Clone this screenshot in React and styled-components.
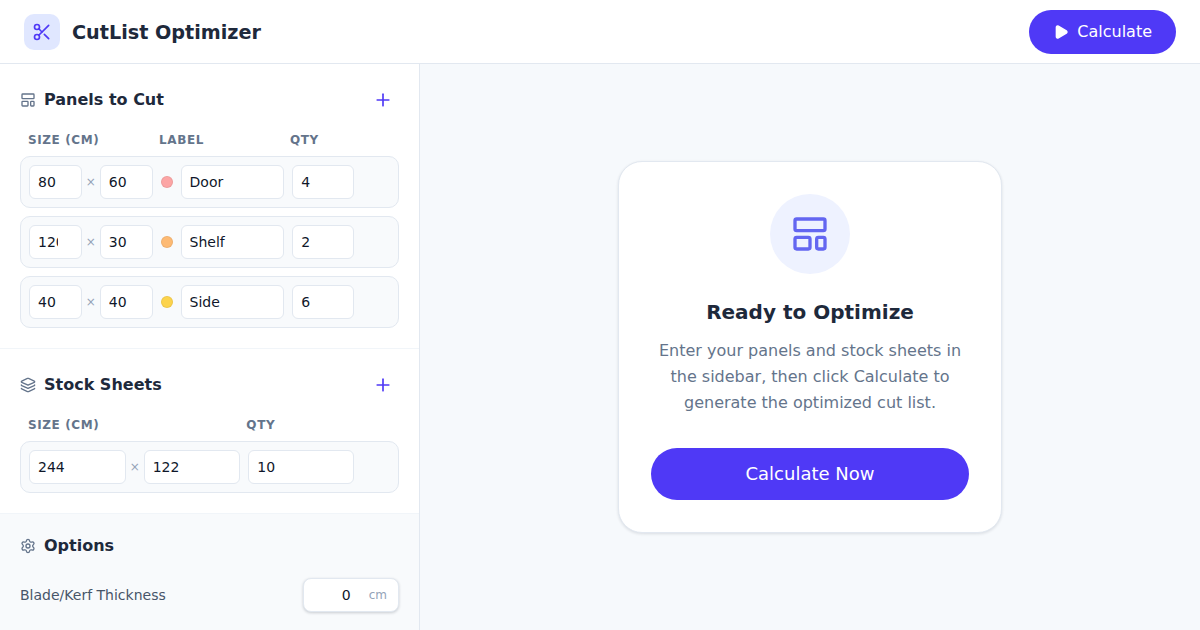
import React from "react";
import styled, { createGlobalStyle } from "styled-components";
import { Scissors, Play, LayoutTemplate, Layers, Settings, Plus } from "lucide-react";

const Global = createGlobalStyle`
  * { box-sizing: border-box; }
  html, body { margin: 0; height: 100%; overflow: hidden; }
  body { font-family: "DejaVu Sans", sans-serif; color: #1e293b; background: #f6f9fc; }
  input, button { font-family: inherit; }
`;

const Page = styled.div`
  width: 1200px;
  height: 630px;
  display: flex;
  flex-direction: column;
  overflow: hidden;
`;

const Header = styled.header`
  flex: none;
  height: 64px;
  display: flex;
  align-items: center;
  justify-content: space-between;
  padding: 0 24px;
  background: #fff;
  border-bottom: 1px solid #e2e8f0;
`;

const Brand = styled.div`
  display: flex;
  align-items: center;
  gap: 12px;
`;

const LogoBox = styled.div`
  width: 36px;
  height: 36px;
  border-radius: 10px;
  background: #e0e7ff;
  color: #4f39f6;
  display: flex;
  align-items: center;
  justify-content: center;
`;

const AppTitle = styled.h1`
  margin: 0;
  padding-top: 2px;
  font-size: 19.2px;
  font-weight: 700;
  color: #1e293b;
`;

const HeaderButton = styled.button`
  height: 44px;
  padding: 0 24px;
  border: 0;
  border-radius: 22px;
  background: #4f39f6;
  color: #fff;
  font-size: 16px;
  display: flex;
  align-items: center;
  gap: 8px;
`;

const Body = styled.div`
  flex: 1;
  min-height: 0;
  display: flex;
`;

const Sidebar = styled.aside`
  flex: none;
  width: 420px;
  background: #fff;
  border-right: 1px solid #e2e8f0;
  overflow: hidden;
`;

const Section = styled.section`
  padding: 20px;
  border-bottom: 1px solid #f1f5f9;
  background: ${(p) => (p.$muted ? "#f8fafc" : "#fff")};
`;

const SectionHead = styled.div`
  display: flex;
  align-items: center;
  justify-content: space-between;
  margin-bottom: ${(p) => p.$mb || 16}px;
`;

const SectionTitle = styled.h2`
  margin: 0;
  height: ${(p) => p.$h || 30}px;
  display: flex;
  align-items: center;
  gap: 8px;
  font-size: 16px;
  font-weight: 700;
  color: #1e293b;
  svg { color: #64748b; margin-top: 2px; }
`;

const AddButton = styled.button`
  border: 0;
  background: transparent;
  color: #4f39f6;
  padding: 6px 6px 4px;
  display: flex;
`;

const ColumnHeads = styled.div`
  display: grid;
  grid-template-columns: ${(p) => p.$cols};
  gap: 8px;
  padding: 0 11.5px 0 8px;
  margin-bottom: 6px;
`;

const ColumnHead = styled.span`
  font-size: 12px;
  line-height: 20px;
  font-weight: 700;
  letter-spacing: 0.6px;
  text-transform: uppercase;
  color: #64748b;
`;

const RowList = styled.div`
  display: flex;
  flex-direction: column;
  gap: 8px;
`;

const Row = styled.div`
  display: grid;
  grid-template-columns: ${(p) => p.$cols};
  gap: 8px;
  align-items: center;
  padding: 8px;
  background: #f8fafc;
  border: 1px solid #e2e8f0;
  border-radius: 10px;
`;

const Group = styled.div`
  display: flex;
  align-items: center;
  gap: ${(p) => p.$gap}px;
  min-width: 0;
`;

const Field = styled.input`
  width: 100%;
  min-width: 0;
  flex: 1;
  height: 34px;
  padding: 0 8px;
  font-size: 14px;
  color: #0f172a;
  background: #fff;
  border: 1px solid #e2e8f0;
  border-radius: 6px;
  outline: none;
`;

const Times = styled.span`
  flex: none;
  font-size: 12px;
  color: #94a3b8;
`;

const Dot = styled.span`
  flex: none;
  width: 12px;
  height: 12px;
  border-radius: 50%;
  background: ${(p) => p.$color};
  border: 1px solid rgba(0, 0, 0, 0.06);
`;

const OptionRow = styled.div`
  display: flex;
  align-items: center;
  justify-content: space-between;
`;

const OptionLabel = styled.label`
  font-size: 14px;
  color: #475569;
`;

const UnitBox = styled.div`
  width: 96px;
  height: 34px;
  display: flex;
  align-items: center;
  gap: 3px;
  padding: 0 11px 0 8px;
  background: #fff;
  border: 1px solid #e2e8f0;
  border-radius: 8px;
  box-shadow: 0 1px 3px rgba(15, 23, 42, 0.2);
`;

const UnitInput = styled.input`
  flex: 1;
  width: 100%;
  min-width: 0;
  border: 0;
  padding: 0;
  outline: none;
  background: transparent;
  text-align: right;
  font-size: 14px;
  color: #0f172a;
`;

const Unit = styled.span`
  font-size: 12px;
  color: #94a3b8;
`;

const Main = styled.main`
  flex: 1;
  display: flex;
  align-items: center;
  justify-content: center;
  background: #f6f9fc;
`;

const Card = styled.div`
  width: 384px;
  height: 372px;
  padding: 32px;
  display: flex;
  flex-direction: column;
  align-items: center;
  background: #fff;
  border: 1px solid #e2e8f0;
  border-radius: 24px;
  box-shadow: 0 1px 3px rgba(15, 23, 42, 0.12);
`;

const HeroIcon = styled.div`
  width: 80px;
  height: 80px;
  border-radius: 50%;
  background: #eef2ff;
  color: #6366f1;
  display: flex;
  align-items: center;
  justify-content: center;
  margin-bottom: 24px;
`;

const CardTitle = styled.h3`
  margin: 0 0 12px;
  font-size: 20px;
  line-height: 28px;
  font-weight: 700;
  color: #1e293b;
`;

const CardText = styled.p`
  margin: 0 0 32px;
  font-size: 16px;
  line-height: 26px;
  text-align: center;
  color: #64748b;
`;

const CardButton = styled.button`
  width: 100%;
  height: 52px;
  padding: 0 0 2px;
  border: 0;
  border-radius: 26px;
  background: #4f39f6;
  color: #fff;
  font-size: 18px;
`;

const PANEL_COLS = "2fr 2fr 1fr 28px";
const STOCK_COLS = "2fr 1fr 28px";

const panels = [
  { w: 80, h: 60, label: "Door", qty: 4, color: "#fca5a5" },
  { w: 120, h: 30, label: "Shelf", qty: 2, color: "#fdba74" },
  { w: 40, h: 40, label: "Side", qty: 6, color: "#fcd34d" },
];

export default function App() {
  return (
    <Page>
      <Global />
      <Header>
        <Brand>
          <LogoBox><Scissors size={20} /></LogoBox>
          <AppTitle>CutList Optimizer</AppTitle>
        </Brand>
        <HeaderButton><Play size={16} fill="currentColor" />Calculate</HeaderButton>
      </Header>
      <Body>
        <Sidebar>
          <Section>
            <SectionHead>
              <SectionTitle><LayoutTemplate size={16} />Panels to Cut</SectionTitle>
              <AddButton aria-label="Add panel"><Plus size={20} /></AddButton>
            </SectionHead>
            <ColumnHeads $cols={PANEL_COLS}>
              <ColumnHead>Size (cm)</ColumnHead>
              <ColumnHead>Label</ColumnHead>
              <ColumnHead>Qty</ColumnHead>
            </ColumnHeads>
            <RowList>
              {panels.map((p) => (
                <Row key={p.label} $cols={PANEL_COLS}>
                  <Group $gap={4}>
                    <Field type="number" defaultValue={p.w} />
                    <Times>×</Times>
                    <Field type="number" defaultValue={p.h} />
                  </Group>
                  <Group $gap={8}>
                    <Dot $color={p.color} />
                    <Field type="text" defaultValue={p.label} />
                  </Group>
                  <Field type="number" defaultValue={p.qty} />
                </Row>
              ))}
            </RowList>
          </Section>
          <Section>
            <SectionHead>
              <SectionTitle><Layers size={16} />Stock Sheets</SectionTitle>
              <AddButton aria-label="Add sheet"><Plus size={20} /></AddButton>
            </SectionHead>
            <ColumnHeads $cols={STOCK_COLS}>
              <ColumnHead>Size (cm)</ColumnHead>
              <ColumnHead>Qty</ColumnHead>
            </ColumnHeads>
            <Row $cols={STOCK_COLS}>
              <Group $gap={4}>
                <Field type="number" defaultValue={244} />
                <Times>×</Times>
                <Field type="number" defaultValue={122} />
              </Group>
              <Field type="number" defaultValue={10} />
            </Row>
          </Section>
          <Section $muted>
            <SectionHead $mb={22}>
              <SectionTitle $h={22}><Settings size={16} />Options</SectionTitle>
            </SectionHead>
            <OptionRow>
              <OptionLabel>Blade/Kerf Thickness</OptionLabel>
              <UnitBox>
                <UnitInput type="number" defaultValue={0} />
                <Unit>cm</Unit>
              </UnitBox>
            </OptionRow>
          </Section>
        </Sidebar>
        <Main>
          <Card>
            <HeroIcon><LayoutTemplate size={40} /></HeroIcon>
            <CardTitle>Ready to Optimize</CardTitle>
            <CardText>
              Enter your panels and stock sheets in the sidebar, then click Calculate to generate the optimized cut list.
            </CardText>
            <CardButton>Calculate Now</CardButton>
          </Card>
        </Main>
      </Body>
    </Page>
  );
}
